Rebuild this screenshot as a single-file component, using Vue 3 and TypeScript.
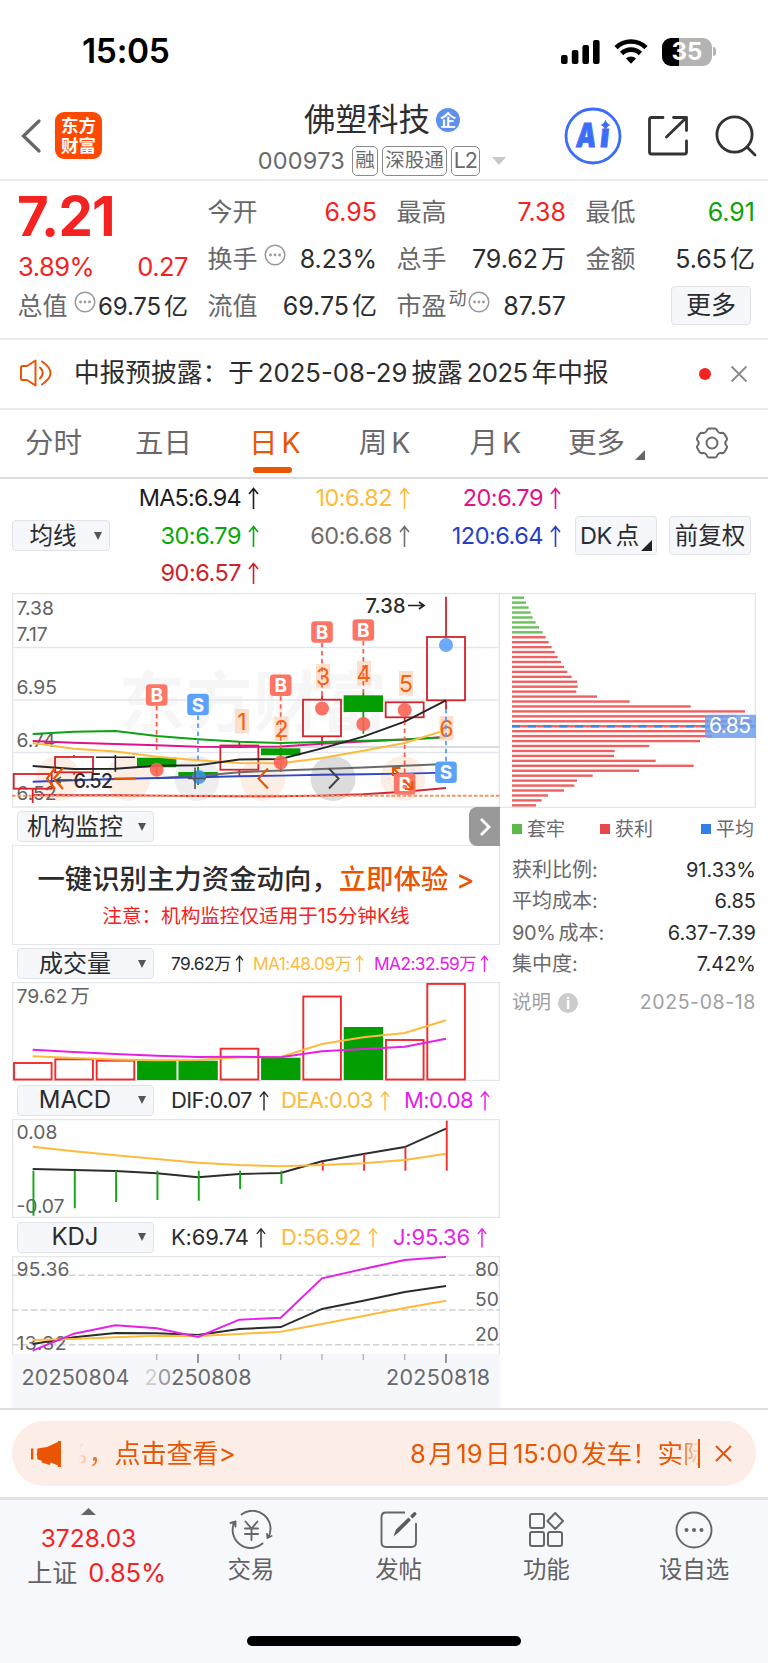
<script setup lang="ts">
const STEP = 41.33
const X0 = 32.7
const cx = (i: number): number => X0 + STEP * i
const line = (ys: number[], start = 0): string =>
  ys.map((y, i) => `${cx(i + start).toFixed(1)},${y}`).join(' ')

interface Quote { label: string; value: string; unit?: string; tone?: string; dots?: boolean; sup?: string }
const quoteCols: Quote[][] = [
  [
    { label: '今开', value: '6.95', tone: 'up' },
    { label: '换手', value: '8.23%', dots: true },
    { label: '流值', value: '69.75', unit: '亿' },
  ],
  [
    { label: '最高', value: '7.38', tone: 'up' },
    { label: '总手', value: '79.62', unit: '万' },
    { label: '市盈', value: '87.57', dots: true, sup: '动' },
  ],
  [
    { label: '最低', value: '6.91', tone: 'down' },
    { label: '金额', value: '5.65', unit: '亿' },
  ],
]

const averages = [
  { text: 'MA5:6.94', color: '#1c1c1e' },
  { text: '10:6.82', color: '#fdbb3c' },
  { text: '20:6.79', color: '#e0128c' },
  { text: '30:6.79', color: '#0aa80a' },
  { text: '60:6.68', color: '#6e6e6e' },
  { text: '120:6.64', color: '#2540c4' },
  { text: '90:6.57', color: '#cf1f2b' },
]

interface Candle { top: number; bottom: number; high: number; low: number; up: boolean }
const candles: (Candle | null)[] = [
  { top: 774, bottom: 788.7, high: 774, low: 803, up: true },
  { top: 757, bottom: 772.3, high: 755, low: 774.7, up: true },
  null,
  { top: 757.7, bottom: 767.3, high: 757.7, low: 776, up: false },
  { top: 772, bottom: 777.3, high: 767, low: 785, up: false },
  { top: 745.5, bottom: 769.7, high: 742, low: 775.7, up: true },
  { top: 748.3, bottom: 755.3, high: 747, low: 771.7, up: false },
  { top: 699.7, bottom: 736.3, high: 695.3, low: 745.7, up: true },
  { top: 695.3, bottom: 712, high: 692.7, low: 733.7, up: false },
  { top: 702.3, bottom: 717.3, high: 702.3, low: 721.7, up: true },
  { top: 637, bottom: 700.3, high: 596.7, low: 709.7, up: true },
]

const maLines = [
  { color: '#6a6a6a', pts: line([778.3, 776, 772.3, 770.5, 769, 767.5, 765.8, 764], 3) },
  { color: '#3447c6', pts: line([781.7, 780.3, 779, 778, 777.3, 776.3, 775.6, 774.7, 774.2, 773.6, 772.6]) },
  { color: '#d02a38', pts: line([795, 795.3, 795.3, 795.6, 796, 796.2, 796.2, 795.6, 794.3, 791.8, 788]) },
  { color: '#e0128c', pts: line([741, 742.7, 744, 745.3, 746.7, 747, 746.5, 743.7, 741.5, 739.5, 737]) },
  { color: '#0aa314', pts: line([734, 731.8, 731, 736, 739.3, 741.8, 743, 742, 740.7, 739.5, 737.3]) },
  { color: '#fdbb3c', pts: line([743, 748.7, 751.5, 756.7, 760.3, 763, 763.3, 758, 750.7, 743, 730]) },
  { color: '#262626', pts: line([766, 769, 768.7, 765.7, 765.3, 759.5, 759, 748.3, 736.7, 721.7, 700.3]) },
]

interface Mark { i: number; y: number; dot?: number; to: number; sell?: boolean }
const marks: Mark[] = [
  { i: 3, y: 695, dot: 769.7, to: 750 },
  { i: 4, y: 704.5, to: 760, sell: true },
  { i: 6, y: 685.3, dot: 762.5, to: 748 },
  { i: 7, y: 632, dot: 708.5, to: 695 },
  { i: 8, y: 630, dot: 724, to: 693 },
  { i: 9, y: 784, dot: 710, to: 722 },
  { i: 10, y: 772.3, dot: 645, to: 709, sell: true },
]
const stem = (m: Mark): string => `M${cx(m.i)} ${m.to > m.y ? m.y + 11 : m.y - 11}V${m.to}`
const counts = [
  { n: 1, x: 242, y: 709 }, { n: 2, x: 281.5, y: 716.7 }, { n: 3, x: 323, y: 664 },
  { n: 4, x: 364, y: 661 }, { n: 5, x: 406, y: 671 }, { n: 6, x: 446.5, y: 716 },
]

const chipEnds = [
  87, 93, 101, 107, 113, 122, 132, 143, 152, 161, 170, 179, 188, 198, 207, 217, 230, 247, 248, 244, 306, 404,
  587, 750, 723, 771, 780, 718, 651, 615, 463, 359, 357, 482, 596, 432, 293, 246, 238, 207, 159, 140, 123,
]
const chips = chipEnds.map((e, i) => ({
  y: 596.5 + i * 4.944,
  w: (e - 51) / 3,
  fill: i < 8 ? '#6cc05c' : '#ef6060',
}))

const stats = [
  { label: '获利比例:', value: '91.33%' },
  { label: '平均成本:', value: '6.85' },
  { num: '90%', label: '成本:', value: '6.37-7.39' },
  { label: '集中度:', value: '7.42%' },
]

const volumes = [
  { y: 1063, up: true }, { y: 1059.3, up: true }, { y: 1060.7, up: true }, { y: 1060.7, up: false },
  { y: 1060.7, up: false }, { y: 1048.7, up: true }, { y: 1057.7, up: false }, { y: 996.5, up: true },
  { y: 1027, up: false }, { y: 1040, up: true }, { y: 983.9, up: true },
]
const volMa1 = line([1056.3, 1058, 1059.5, 1060.3, 1060, 1057.3, 1057, 1044, 1037.3, 1033, 1020.3])
const volMa2 = line([1049.7, 1052, 1054, 1055.7, 1057, 1056.7, 1057.3, 1051.3, 1049, 1046.7, 1038.7])

const macdEnds = [1215.7, 1208.3, 1202, 1200, 1200.7, 1189, 1184, 1162, 1154, 1146.7, 1120.7]
const macdBars = macdEnds.map((e, i) => ({
  x: cx(i) + 0.7,
  y: Math.min(e, 1170.7),
  h: Math.abs(e - 1170.7),
  fill: e > 1170.7 ? '#12a616' : '#f33030',
}))
const dif = line([1169, 1170, 1171, 1173.3, 1177.3, 1174, 1173, 1161.3, 1154, 1147, 1128.7])
const dea = line([1146.7, 1151.3, 1155.3, 1159, 1162.7, 1165, 1166.3, 1165, 1163.3, 1160, 1153.7])

const kLine = line([1344, 1337.3, 1333, 1333.3, 1335, 1329, 1327, 1309, 1300.7, 1292, 1286])
const dLine = line([1340, 1339, 1337.3, 1335.7, 1336, 1334, 1331.7, 1324, 1316, 1308, 1300.7])
const jLine = line([1350.7, 1333.7, 1325.3, 1328.3, 1337, 1319.7, 1317.7, 1278.3, 1269, 1260, 1256.9])

const volVals = [['k', '79.62万'], ['y', 'MA1:48.09万'], ['m', 'MA2:32.59万']]
const macdVals = [['k', 'DIF:0.07'], ['y', 'DEA:0.03'], ['m', 'M:0.08']]
const kdjVals = [['k', 'K:69.74'], ['y', 'D:56.92'], ['m', 'J:95.36']]
</script>

<template>
  <div class="phone" lang="zh-CN">
    <div class="status">
      <span class="clock">15:05</span>
      <div class="signals">
        <svg width="39" height="24" viewBox="0 0 39 24">
          <rect x="0" y="15" width="6.6" height="9" rx="2" /><rect x="10.8" y="10" width="6.6" height="14" rx="2" />
          <rect x="21.4" y="5" width="6.6" height="19" rx="2" /><rect x="32" y="0" width="6.6" height="24" rx="2" />
        </svg>
        <svg class="wifi" width="34" height="25" viewBox="0 0 34 25">
          <g fill="none" stroke="#000" stroke-width="4.6">
            <path d="M2 8.6A21.5 21.5 0 0 1 32 8.6" /><path d="M7.6 14.5A13.4 13.4 0 0 1 26.4 14.5" />
          </g>
          <path d="M17 24.8L12 19.6A7 7 0 0 1 22 19.6Z" />
        </svg>
        <div class="battery"><span>35</span></div>
        <i class="tip"></i>
      </div>
    </div>

    <header class="head">
      <div class="head-left">
        <svg width="20" height="34" viewBox="0 0 20 34"><path d="M18 2L2.5 17L18 32" fill="none" stroke="#666" stroke-width="3.2" stroke-linecap="round" /></svg>
        <div class="logo"><span>东方</span><span>财富</span></div>
      </div>
      <div class="title">
        <div class="name"><span>佛塑科技</span><b>企</b></div>
        <div class="code"><span class="num">000973</span><i>融</i><i>深股通</i><i>L2</i>
          <svg width="14" height="8" viewBox="0 0 14 8"><path d="M0 0H14L7 8Z" fill="#c8c8c8" /></svg>
        </div>
      </div>
      <div class="head-right">
        <svg width="58" height="58" viewBox="0 0 58 58">
          <circle cx="29" cy="29" r="27" fill="none" stroke="#3b6df8" stroke-width="2.8" />
          <g class="ai" transform="translate(4.5 0) skewX(-6)">
            <text x="11" y="40" textLength="20" lengthAdjust="spacingAndGlyphs">A</text>
            <text x="35" y="40" textLength="9" lengthAdjust="spacingAndGlyphs">ı</text>
          </g>
          <path d="M41.500 12.500Q42.800 16.700 46.500 18Q42.800 19.300 41.500 23.500Q40.200 19.300 36.500 18Q40.200 16.700 41.500 12.500Z" fill="#3b6df8" />
        </svg>
        <svg class="share" width="42" height="42" viewBox="0 0 42 42">
          <g fill="none" stroke="#333" stroke-width="2.800" stroke-linecap="round" stroke-linejoin="round">
            <path d="M16 2.500H4.500Q2.500 2.500 2.500 4.500V37Q2.500 39 4.500 39H37.500Q39.500 39 39.500 37V26" />
            <path d="M26.500 2.500H39.500V15.500M39 3L19.500 22" />
          </g>
        </svg>
        <svg class="search" width="42" height="42" viewBox="0 0 42 42">
          <g fill="none" stroke="#333" stroke-width="2.800" stroke-linecap="round"><circle cx="19.500" cy="19.500" r="17.600" /><path d="M32 32L40 40" /></g>
        </svg>
      </div>
    </header>

    <section class="quote">
      <div class="qcol">
        <div class="price">7.21</div>
        <div class="change"><span>3.89%</span><span>0.27</span></div>
        <div class="cap">
          <span class="qlabel">总值</span>
          <svg class="dots" width="22" height="22" viewBox="0 0 22 22"><circle cx="11" cy="11" r="9.800" fill="none" stroke="#999" stroke-width="1.500" /><g fill="#999"><circle cx="6.500" cy="11" r="1.400" /><circle cx="11" cy="11" r="1.400" /><circle cx="15.500" cy="11" r="1.400" /></g></svg>
          <span class="qval">69.75<em>亿</em></span>
        </div>
      </div>
      <div v-for="(col, c) in quoteCols" :key="c" class="qcol">
        <div v-for="q in col" :key="q.label" class="qrow">
          <span class="qlabel">{{ q.label }}</span>
          <sup v-if="q.sup">{{ q.sup }}</sup>
          <svg v-if="q.dots" class="dots" :class="{ tight: q.sup }" width="22" height="22" viewBox="0 0 22 22"><circle cx="11" cy="11" r="9.800" fill="none" stroke="#999" stroke-width="1.500" /><g fill="#999"><circle cx="6.500" cy="11" r="1.400" /><circle cx="11" cy="11" r="1.400" /><circle cx="15.500" cy="11" r="1.400" /></g></svg>
          <span class="qval" :class="q.tone">{{ q.value }}<em v-if="q.unit">{{ q.unit }}</em></span>
        </div>
        <div v-if="c === 2" class="qrow end"><button class="more">更多</button></div>
      </div>
    </section>

    <section class="notice">
      <svg width="33" height="28" viewBox="0 0 33 28">
        <g fill="none" stroke="#ea5504" stroke-width="2" stroke-linecap="round" stroke-linejoin="round">
          <path d="M15.500 1.500L7 7H2.500Q1 7 1 8.500V19.500Q1 21 2.500 21H7L15.500 26.500Z" /><path d="M20 8.500Q25.500 14 20 19.500M22 2.500Q39 14 22 25.500" />
        </g>
      </svg>
      <p>中报预披露：于<span class="g"></span>2025-08-29<span class="g"></span>披露<span class="g"></span><span class="yr">2025</span><span class="g"></span>年中报</p>
      <i class="reddot"></i>
      <svg class="close" width="18" height="18" viewBox="0 0 18 18"><path d="M1.500 1.500L16.500 16.500M16.500 1.500L1.500 16.500" stroke="#8c8c8c" stroke-width="1.900" /></svg>
    </section>

    <nav class="tabs">
      <span>分时</span><span>五日</span><span class="on">日<em>K</em></span><span>周<em>K</em></span><span>月<em>K</em></span>
      <span class="drop">更多<svg width="10" height="10" viewBox="0 0 10 10"><path d="M10 0V10H0Z" fill="#666" /></svg></span>
      <svg class="gear" width="34" height="34" viewBox="0 0 34 34"><g fill="none" stroke="#6a6a6a" stroke-width="2" stroke-linejoin="round"><path d="M11.500 5Q12.500 2.500 14 2.500H20Q21.500 2.500 22.500 5Q23.500 7.500 26 7Q28.500 6.500 29.500 8L32 12.500Q32.500 14 31 15Q29.500 17 31 19Q32.500 20 32 21.500L29.500 26Q28.500 27.500 26 27Q23.500 26.500 22.500 29Q21.500 31.500 20 31.500H14Q12.500 31.500 11.500 29Q10.500 26.500 8 27Q5.500 27.500 4.500 26L2 21.500Q1.500 20 3 19Q4.500 17 3 15Q1.500 14 2 12.500L4.500 8Q5.500 6.500 8 7Q10.500 7.500 11.500 5Z" /><circle cx="17" cy="17" r="5.500" /></g></svg>
    </nav>

    <section class="legend">
      <button class="pick small"><span>均线</span><i></i></button>
      <div class="avgs">
        <span v-for="a in averages" :key="a.text" :style="{ color: a.color }">{{ a.text }}<svg class="arr" width="11" height="22" viewBox="0 0 11 22"><path d="M5.500 22V1.500M1 7L5.500 1.500L10 7" fill="none" stroke="currentColor" stroke-width="1.600" /></svg></span>
      </div>
      <button class="tool dk">DK<em>点</em><i></i></button>
      <button class="tool">前复权</button>
    </section>

    <main class="board">
      <div class="left">
        <svg class="plot" width="488" height="215" viewBox="12 593 488 215">
          <text x="119" y="726" class="mark" textLength="268">东方财富</text>
          <g class="frame">
            <path d="M12 647.500H500M12 700H500M12 752.500H500" />
            <path d="M248 747H500" stroke="#d8dae4" stroke-width="2.200" /><path d="M12.500 593.500H499.500V807H12.500Z" />
          </g>
          <g>
            <circle v-for="(x, i) in [58, 128, 197, 263, 333, 403]" :key="x" :cx="x" cy="778.500" r="22.500" :fill="i === 2 || i === 4 ? (i === 4 ? '#dcdcdc' : '#eeeeee') : '#fdeee5'" />
          </g>
          <g class="axis">
            <text x="16.500" y="615">7.38</text><text x="16.500" y="640.500">7.17</text><text x="16.500" y="694">6.95</text>
            <text x="16.500" y="747">6.74</text><text x="16.500" y="800">6.52</text>
          </g>
          <template v-for="(k, i) in candles" :key="i">
            <g v-if="k && k.up" fill="none" stroke="#d3232b" stroke-width="1.800">
              <rect :x="cx(i) - 19" :y="k.top" width="38" :height="k.bottom - k.top" />
              <path :d="`M${cx(i)} ${k.high}V${k.top}M${cx(i)} ${k.bottom}V${k.low}`" />
            </g>
            <g v-else-if="k" fill="#029e02">
              <rect :x="cx(i) - 19.700" :y="k.top" width="39.400" :height="k.bottom - k.top" />
              <rect :x="cx(i) - 0.900" :y="k.high" width="1.800" :height="k.low - k.high" />
            </g>
            <path v-else :d="`M${cx(i) - 19.500} 757.300h39M${cx(i)} 755V771.700`" stroke="#222" stroke-width="1.600" />
          </template>
          <polyline v-for="m in maLines" :key="m.color" :points="m.pts" fill="none" :stroke="m.color" stroke-width="1.900" />
          <path d="M12 795.700H500" stroke="#f5935f" stroke-width="2" stroke-dasharray="3.500 2" />
          <g fill="none" stroke="#ea5504" stroke-width="2.200">
            <path d="M55 768L47 778.500L55 789M63 768L54 778.500L63 789M114 778.500H136M268 768.500L258.500 778.500L268 788.500" />
            <path d="M400.500 768H393V776M393.500 768.500L402 777" />
          </g>
          <path d="M329 768.500L338.500 778.500L329 788.500" fill="none" stroke="#444" stroke-width="2" />
          <text x="73.500" y="787.500" class="low" textLength="39.500">6.52</text>
          <path d="M57 780H72M61 777L56.500 780L61 783" stroke="#444" stroke-width="1.400" fill="none" />
          <circle :cx="199" cy="777" r="7" fill="#3f8fe8" fill-opacity=".85" />
          <path d="M195 767.500V789M188 778.500H206" stroke="#555" stroke-width="1.600" />
          <g v-for="c in counts" :key="c.n">
            <rect :x="c.x - 7" :y="c.y" width="14" height="24.500" fill="#fcd9c4" fill-opacity=".85" />
            <text :x="c.x" :y="c.y + 20.500" class="count" text-anchor="middle">{{ c.n }}</text>
          </g>
          <g v-for="m in marks" :key="m.i">
            <path :d="stem(m)" :stroke="m.sell ? '#5a9ff8' : '#f8604e'" stroke-width="1.800" stroke-dasharray="4.500 3.500" />
            <circle v-if="m.dot" :cx="cx(m.i)" :cy="m.dot" r="7" :fill="m.sell ? '#5ca1fa' : '#fb6454'" fill-opacity=".9" />
            <rect :x="cx(m.i) - 10.800" :y="m.y - 10.800" width="21.600" height="21.600" rx="3.500" :fill="m.sell ? '#5ca1fa' : '#fd7565'" />
            <text :x="cx(m.i)" :y="m.y + 7" class="bs" text-anchor="middle">{{ m.sell ? 'S' : 'B' }}</text>
          </g>
          <path d="M404 780L412 788.500M405 789H412.500V781" fill="none" stroke="#ea5504" stroke-width="2.200" />
          <text x="365.500" y="612.500" class="low" textLength="40">7.38</text>
          <path d="M408 605.500H423M419 602L424 605.500L419 609" stroke="#222" stroke-width="1.700" fill="none" />
        </svg>

        <div class="bar"><button class="pick"><span>机构监控</span><i></i></button>
          <div class="fold"><svg width="12" height="20" viewBox="0 0 12 20"><path d="M2 2L10 10L2 18" fill="none" stroke="#fff" stroke-width="2.800" /></svg></div>
        </div>
        <div class="banner">
          <p class="big">一键识别主力资金动向，<b>立即体验<em>&gt;</em></b></p>
          <p class="warn">注意：机构监控仅适用于15分钟K线</p>
        </div>

        <div class="bar"><button class="pick"><span>成交量</span><i></i></button>
          <div class="vals vol">
            <span v-for="v in volVals" :key="v[1]" :class="v[0]">{{ v[1] }}<svg class="arr" width="9" height="17" viewBox="0 0 11 22"><path d="M5.500 22V1.500M1 7L5.500 1.500L10 7" fill="none" stroke="currentColor" stroke-width="1.800" /></svg></span>
          </div>
        </div>
        <svg class="plot" width="488" height="99" viewBox="12 982 488 99">
          <path class="frame" d="M12.500 982.500H499.500V1080.500H12.500Z" />
          <template v-for="(v, i) in volumes" :key="i">
            <rect v-if="v.up" :x="cx(i) - 18.700" :y="v.y" width="37.600" :height="1079.500 - v.y" fill="#fff" stroke="#f22a2a" stroke-width="1.900" />
            <rect v-else :x="cx(i) - 19.600" :y="v.y" width="39.400" :height="1080 - v.y" fill="#029e02" />
          </template>
          <text x="16.500" y="1002.500" class="axis">79.62<tspan dx="3">万</tspan></text>
          <polyline :points="volMa1" fill="none" stroke="#fdbb3c" stroke-width="2" />
          <polyline :points="volMa2" fill="none" stroke="#e620e6" stroke-width="2" />
        </svg>

        <div class="bar"><button class="pick"><span>MACD</span><i></i></button>
          <div class="vals macd">
            <span v-for="v in macdVals" :key="v[1]" :class="v[0]">{{ v[1] }}<svg class="arr" width="10" height="21" viewBox="0 0 11 22"><path d="M5.500 22V1.500M1 7L5.500 1.500L10 7" fill="none" stroke="currentColor" stroke-width="1.600" /></svg></span>
          </div>
        </div>
        <svg class="plot" width="488" height="99" viewBox="12 1119 488 99">
          <path class="frame" d="M12.500 1119.500H499.500V1217.500H12.500Z" />
          <g class="axis"><text x="16.500" y="1138.800">0.08</text><text x="16.500" y="1212.500" textLength="48">-0.07</text></g>
          <polyline :points="dif" fill="none" stroke="#2c2c2c" stroke-width="1.900" />
          <rect v-for="b in macdBars" :key="b.x" :x="b.x - 0.900" :y="b.y" width="1.900" :height="b.h" :fill="b.fill" />
          <polyline :points="dea" fill="none" stroke="#fdbb3c" stroke-width="1.900" />
        </svg>

        <div class="bar"><button class="pick"><span>KDJ</span><i></i></button>
          <div class="vals kdj">
            <span v-for="v in kdjVals" :key="v[1]" :class="v[0]">{{ v[1] }}<svg class="arr" width="10" height="21" viewBox="0 0 11 22"><path d="M5.500 22V1.500M1 7L5.500 1.500L10 7" fill="none" stroke="currentColor" stroke-width="1.600" /></svg></span>
          </div>
        </div>
        <svg class="plot" width="488" height="152" viewBox="12 1256 488 152">
          <rect x="12" y="1354" width="488" height="54" fill="#f6f7fa" />
          <path class="frame" d="M12.500 1354V1256.500H499.500V1354" />
          <path d="M12 1275.300H500M12 1310H500M12 1344.700H500" stroke="#d2d2d4" stroke-width="1.600" stroke-dasharray="6.500 3" />
          <g class="axis">
            <text x="16.500" y="1275.800" textLength="53">95.36</text><text x="16.500" y="1349.500" textLength="50">13.32</text>
            <text x="499" y="1276" text-anchor="end">80</text><text x="499" y="1306" text-anchor="end">50</text><text x="499" y="1341" text-anchor="end">20</text>
          </g>
          <polyline :points="kLine" fill="none" stroke="#2c2c2c" stroke-width="1.900" />
          <polyline :points="dLine" fill="none" stroke="#fdbb3c" stroke-width="1.900" />
          <polyline :points="jLine" fill="none" stroke="#e620e6" stroke-width="1.900" />
          <path d="M156.700 1354v6M239.300 1354v6M280.700 1354v6M322 1354v6M363.300 1354v6M404.700 1354v6" stroke="#b4b4b6" stroke-width="1.400" />
          <path d="M198 1354v9M446 1354v9" stroke="#8c8c8e" stroke-width="1.800" />
          <g class="date">
            <text x="21.500" y="1384.500" textLength="108">20250804</text>
            <text x="144.500" y="1384.500" textLength="107"><tspan fill="#cfcfd1">2</tspan><tspan fill="#9a9a9c">0</tspan>250808</text>
            <text x="386" y="1384.500" textLength="104">20250818</text>
          </g>
        </svg>
      </div>

      <div class="right">
        <svg class="plot" width="256" height="215" viewBox="500 593 256 215">
          <path class="frame" d="M500 593.500H755.500V807.500H500" />
          <rect v-for="c in chips" :key="c.y" x="512" :y="c.y" :width="c.w" height="2.400" :fill="c.fill" />
          <path d="M512 726.300H755" stroke="#3a86e8" stroke-width="2.400" stroke-dasharray="8 7.800" />
          <path d="M708 714.700H756V738H708Q705 738 705 735V717.700Q705 714.700 708 714.700Z" fill="#6d9fec" fill-opacity=".86" />
          <text x="709" y="733" class="tag" textLength="42">6.85</text>
        </svg>
        <div class="keys"><span><i class="g1"></i>套牢</span><span><i class="r1"></i>获利</span><span><i class="b1"></i>平均</span></div>
        <div v-for="s in stats" :key="s.label" class="stat"><span><em v-if="s.num">{{ s.num }}</em>{{ s.label }}</span><b>{{ s.value }}</b></div>
        <div class="explain"><span>说明</span><i>i</i><time>2025-08-18</time></div>
      </div>
    </main>

    <div class="promo-wrap">
      <div class="promo">
        <svg width="31" height="26" viewBox="0 0 31 26" fill="#ea5504"><rect x="0" y="7.500" width="2.400" height="11" /><path d="M6.500 7.500L16 6L27 1V0H30V26H27V24.500L20 21.500L18.500 24L11 21.500L10.500 19.500L6.500 18.500Q5 13 6.500 7.500Z" /></svg>
        <div class="roll"><span class="r-a">%，点击查看&gt;</span><span class="r-b">8<em>月</em>19<em>日</em>15:00<em>发车！实际</em></span></div>
        <i class="rule"></i>
        <svg class="px" width="17" height="17" viewBox="0 0 17 17"><path d="M1 1L16 16M16 1L1 16" stroke="#ea5504" stroke-width="2" /></svg>
      </div>
    </div>

    <footer class="foot">
      <div class="index">
        <svg width="15" height="7" viewBox="0 0 15 7"><path d="M0 7L7.500 0L15 7Z" fill="#666" /></svg>
        <span class="pts">3728.03</span>
        <span class="sz">上证<b>0.85%</b></span>
      </div>
      <div class="item">
        <svg width="44" height="40" viewBox="0 0 44 40"><g fill="none" stroke="#666" stroke-width="1.900" stroke-linecap="round" stroke-linejoin="round"><path d="M12.500 4.500A18 18 0 0 1 39.500 27M33.500 33.500A18 18 0 0 1 5.500 12M1.500 13L6.500 11.500V16.500M42.500 26L38.500 28L38 24" /><path d="M16.500 11.500L22.500 18.500L28.500 11.500M22.500 18.500V30M16 18.500H29M16 24H29" /></g></svg>
        <span>交易</span>
      </div>
      <div class="item">
        <svg width="40" height="40" viewBox="0 0 40 40"><path d="M26 2.500H7Q2.500 2.500 2.500 7V32.500Q2.500 37 7 37H32.500Q37 37 37 32.500V13" fill="none" stroke="#666" stroke-width="1.900" /><path d="M14.500 26.500L17 19.500L29.500 7.500L32 10L19.500 22.500ZM31 6L34.500 2.500Q36 1.500 37 2.800Q38 4 37 5L33.500 8.500Z" fill="#5c5c5c" /></svg>
        <span>发帖</span>
      </div>
      <div class="item">
        <svg width="40" height="40" viewBox="0 0 40 40"><g fill="none" stroke="#666" stroke-width="2"><rect x="4" y="4" width="14" height="14" rx="2" /><rect x="4" y="22" width="14" height="14" rx="2" /><rect x="22" y="22" width="14" height="14" rx="2" /><path d="M29.200 3L37 11L29.200 19L21.500 11Z" stroke-linejoin="round" /></g></svg>
        <span>功能</span>
      </div>
      <div class="item">
        <svg width="40" height="40" viewBox="0 0 40 40"><circle cx="20" cy="20" r="17.500" fill="none" stroke="#666" stroke-width="1.900" /><g fill="#666"><circle cx="12.500" cy="20" r="2" /><circle cx="20" cy="20" r="2" /><circle cx="27.500" cy="20" r="2" /></g></svg>
        <span>设自选</span>
      </div>
      <i class="home"></i>
    </footer>
  </div>
</template>

<style>
body { margin: 0; background: #fff; }
</style>

<style scoped>
.phone { width: 768px; height: 1663px; overflow: hidden; background: #fff; color: #2c2c2e; font-family: Inter, "Noto Sans CJK SC", sans-serif; line-height: 1; display: flex; flex-direction: column; }
.phone * { box-sizing: border-box; }
.phone > * { flex: none; }
p { margin: 0; }
i, em { font-style: normal; }
svg { display: block; flex: none; }
button { font-family: inherit; line-height: 1; color: #2c2c2e; background: #f6f7fa; border: 1.5px solid #e1e3e9; border-radius: 4px; padding: 0; white-space: nowrap; flex: none; }

.status { height: 90px; padding: 13px 52px 0 82px; display: flex; align-items: center; justify-content: space-between; }
.clock { font-size: 33.500px; font-weight: 600; color: #000; letter-spacing: -0.300px; }
.signals { display: flex; align-items: center; }
.wifi { margin-left: 14px; }
.battery { width: 50px; height: 28px; margin-left: 14px; border-radius: 9px; background: linear-gradient(90deg, #000 35%, #b3b3b3 35%); display: flex; align-items: center; justify-content: center; color: #fff; font-size: 24px; font-weight: 700; }
.tip { width: 3px; height: 9px; margin-left: 1px; border-radius: 0 4px 4px 0; background: #b3b3b3; }

.head { height: 91px; display: grid; grid-template-columns: 240px 284px 244px; border-bottom: 2px solid #ececee; }
.head-left { display: flex; align-items: center; padding: 2px 0 0 21px; }
.logo { width: 47px; height: 47px; margin-left: 14px; border-radius: 9px; background: #ff4800; color: #fff; font-size: 17.5px; font-weight: 700; display: flex; flex-direction: column; align-items: center; justify-content: center; gap: 2px; }
.title { padding-top: 13px; display: flex; flex-direction: column; align-items: center; gap: 9px; }
.name { height: 34px; display: flex; align-items: center; font-size: 31.500px; color: #2e2e30; }
.name b { width: 24px; height: 24px; margin-left: 6px; border-radius: 12px; background: #5f90ea; color: #fff; font-size: 16px; font-weight: 700; display: flex; align-items: center; justify-content: center; }
.code { height: 30px; display: flex; align-items: center; color: #6a6a6c; font-size: 23.500px; }
.code .num { margin-right: 8px; letter-spacing: 0.200px; width: 86px; white-space: nowrap; }
.code i { height: 30px; padding: 0 2.500px; margin-right: 3.500px; border: 1.500px solid #8a8a8c; border-radius: 5px; font-size: 19.500px; display: flex; align-items: center; }
.code i:last-of-type { font-size: 21.500px; padding: 0 2px; letter-spacing: -1.200px; }
.code svg { margin-left: 9px; }
.head-right { display: flex; align-items: center; padding: 3px 0 0 40px; }
.ai text { font-size: 33px; font-weight: 900; fill: #3b6df8; stroke: #3b6df8; stroke-width: 0.800; }
.share { margin-left: 25px; }
.search { margin-left: 26px; }

.quote { height: 159px; padding: 8px 13px 0 18px; display: grid; grid-template-columns: 170px repeat(3, 169px); column-gap: 20px; border-bottom: 2px solid #ececee; }
.price { height: 54px; display: flex; align-items: center; font-size: 54.500px; font-weight: 650; color: #f52222; letter-spacing: -0.800px; margin-left: -1px; }
.change { height: 47px; display: flex; align-items: center; justify-content: space-between; color: #f52222; font-size: 25.500px; letter-spacing: -0.500px; }
.cap { height: 33px; display: flex; align-items: center; }
.cap .qval { font-size: 24px; letter-spacing: -0.100px; }
.cap .dots { margin-left: 6px; }
.qrow { height: 47px; display: flex; align-items: center; }
.qrow.end { justify-content: flex-end; }
.qlabel { font-size: 25px; color: #69696b; white-space: nowrap; margin-left: -0.500px; }
.dots { margin: -10px 0 0 6px; }
.dots.tight { margin-left: 0; }
sup { font-size: 18px; color: #69696b; margin: -16px 1px 0 2px; line-height: 1; }
.qval { margin-left: auto; font-size: 25px; white-space: nowrap; }
.qval em { margin-left: 3px; }
.up { color: #f52222; }
.down { color: #0ca30c; }
.more { width: 80px; height: 39px; margin-right: 4px; margin-top: -3px; font-size: 25px; }

.notice { height: 70px; padding: 0 20px; display: flex; align-items: center; border-bottom: 2px solid #ececee; }
.notice > svg:first-child { margin-top: -3px; }
.notice p { margin: -3px 0 0 21px; font-size: 25.700px; white-space: nowrap; flex: 1; }
.g { display: inline-block; width: 4px; }
.yr { letter-spacing: -0.600px; }
.reddot { width: 12px; height: 12px; border-radius: 6px; background: #f52222; margin-right: 19px; }

.tabs { height: 69px; display: flex; align-items: center; color: #69696b; font-size: 28.500px; border-bottom: 2px solid #dcdde3; padding-left: 25px; }
.tabs span { height: 67px; display: flex; align-items: center; position: relative; white-space: nowrap; margin-right: 53px; flex: none; }
.tabs span:nth-child(2) { margin-right: 57px; }
.tabs em { margin-left: 4px; }
.tabs .on { color: #ea5504; margin-right: 58px; }
.tabs span:nth-child(4) { margin-right: 59px; }
.tabs span:nth-child(5) { margin-right: 47px; }
.tabs .on::after { content: ""; position: absolute; left: 4px; bottom: 4px; width: 39px; height: 6px; border-radius: 3px; background: #ea5504; }
.drop svg { margin: 22px 0 0 10px; }
.tabs .drop { margin-right: 50px; }
.gear { margin-top: -2px; }

.legend { height: 113px; padding-left: 12px; display: flex; align-items: center; }
.pick { width: 137px; height: 31px; display: flex; align-items: center; font-size: 24px; }
.pick span { width: 114px; text-align: center; }
.pick i { margin-left: 6px; border: 4.800px solid transparent; border-top: 8px solid #555; border-bottom: 0; }
.pick.small { width: 98px; }
.pick.small span { width: 80px; font-size: 23.500px; }
.pick.small i { margin-left: 1px; }
.avgs { width: 451px; display: grid; grid-template-columns: 149px 151px 151px; grid-auto-rows: 37.500px; }
.avgs span { display: flex; align-items: center; justify-content: flex-end; font-size: 23.500px; letter-spacing: -0.500px; }
.avgs span:first-child { letter-spacing: -0.800px; }
.arr { margin-left: 7px; flex: none; }
.tool { width: 82px; height: 39px; margin-left: 12px; font-size: 23.500px; position: relative; }
.dk { margin-left: 14px; text-align: left; padding-left: 4px; letter-spacing: -0.500px; }
.dk em { margin-left: 4px; }
.dk i { position: absolute; right: 4px; bottom: 3px; border-left: 11px solid transparent; border-bottom: 11px solid #222; }

.board { display: grid; grid-template-columns: 488px 256px; padding-left: 12px; height: 815px; margin-top: 1px; }
.frame { fill: none; stroke: #e3e6ec; stroke-width: 1.500; }
.axis { font-size: 19.300px; fill: #626264; }
.mark { font-size: 66px; font-weight: 700; fill: #f6f6f7; }
.low { font-size: 20px; fill: #2c2c2e; font-weight: 500; }
.count { font-size: 23px; fill: #f2610d; }
.bs { font-size: 19px; font-weight: 700; fill: #fff; }
.date { font-size: 21.500px; fill: #69696b; }
.tag { font-size: 21px; fill: #fff; }

.bar { height: 37px; padding-left: 5px; display: flex; align-items: center; position: relative; }
.plot + .bar { height: 38px; }
.plot:first-child + .bar { height: 37px; }
.vals { margin-left: 17px; display: grid; font-size: 22px; white-space: nowrap; letter-spacing: -0.200px; }
.vals span { display: flex; align-items: center; }
.vals.vol { grid-template-columns: 82px 121px auto; font-size: 17.300px; letter-spacing: -0.550px; }
.vals.macd { grid-template-columns: 110px 123px auto; letter-spacing: -0.650px; }
.vals.kdj { grid-template-columns: 110px 112px auto; }
.vol .arr { margin-left: 4px; }
.k { color: #2c2c2e; }
.y { color: #fdbb3c; }
.m { color: #e620e6; }
.fold { position: absolute; right: 0; top: -1px; width: 31px; height: 39px; background: #999; border-radius: 8px 0 0 8px; display: flex; align-items: center; justify-content: center; z-index: 1; }
.banner { height: 100px; border: 1.500px solid #e3e6ec; text-align: center; white-space: nowrap; }
.big { font-size: 27.400px; font-weight: 500; margin-top: 20px; }
.big b { color: #ea5504; font-weight: 500; }
.big em { margin-left: 8px; }
.warn { font-size: 19.600px; color: #f52222; margin-top: 14px; }

.keys { height: 42px; padding-left: 12px; display: grid; grid-template-columns: 88px 101px auto; align-items: center; font-size: 19px; color: #69696b; margin-bottom: 4px; }
.keys span { display: flex; align-items: center; }
.keys i { width: 10px; height: 10px; margin-right: 5px; }
.g1 { background: #5cb947; }
.r1 { background: #ea4848; }
.b1 { background: #2f80e4; }
.stat { height: 31.500px; padding-left: 12px; display: flex; align-items: center; justify-content: space-between; font-size: 20px; color: #69696b; }
.stat em { margin-right: 3px; letter-spacing: -0.400px; }
.stat b { font-weight: 400; color: #2c2c2e; }
.explain { height: 46px; padding-left: 12px; display: flex; align-items: center; font-size: 19.500px; color: #a0a0a2; }
.explain i { width: 20px; height: 20px; border-radius: 10px; margin-left: 7px; background: #ccc; color: #fff; font-size: 15px; font-weight: 700; display: flex; align-items: center; justify-content: center; }
.explain time { margin-left: auto; letter-spacing: 0.600px; }

.promo-wrap { height: 92px; padding: 11px 12px 0; border-top: 2px solid #dcdde3; border-bottom: 3px solid #e2e3e6; }
.promo { height: 65px; border-radius: 32px; background: #fceee7; padding-left: 19px; display: flex; align-items: center; color: #ea5504; font-size: 26px; }
.roll { width: 619px; height: 40px; margin-left: 17px; display: flex; align-items: center; overflow: hidden; white-space: nowrap; -webkit-mask-image: linear-gradient(90deg, transparent, #000 20px, #000 600px, transparent 622px); mask-image: linear-gradient(90deg, transparent, #000 20px, #000 600px, transparent 622px); }
.r-a { width: 347px; margin-left: -16px; flex: none; }
.r-b { font-size: 25.500px; }
.r-b em { margin: 0 2.500px; }
.rule { width: 2px; height: 29px; background: #ea5504; }
.px { margin-left: 15px; }

.foot { flex: 1 !important; background: #f7f8fb; display: grid; grid-template-columns: 177px repeat(4, 147.750px); position: relative; color: #626264; }
.index { display: flex; flex-direction: column; align-items: center; padding-top: 8px; }
.pts { font-size: 24.500px; color: #f52222; margin-top: 11px; }
.sz { font-size: 25px; margin-top: 9px; padding-left: 16px; white-space: nowrap; }
.sz b { font-weight: 400; font-size: 25.500px; color: #f52222; margin-left: 11px; letter-spacing: -0.200px; }
.item { display: flex; flex-direction: column; align-items: center; padding-top: 10px; font-size: 23.500px; }
.item span { margin-top: 8px; }
.home { position: absolute; left: 247px; bottom: 17px; width: 274px; height: 10px; border-radius: 5px; background: #000; }
</style>
